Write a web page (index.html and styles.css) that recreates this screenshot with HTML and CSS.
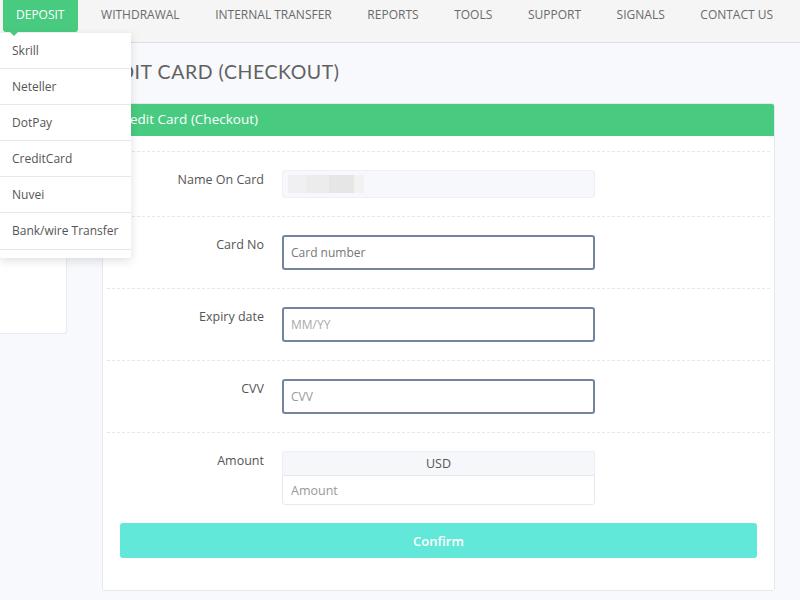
FILE: index.html
```html
<!DOCTYPE html>
<html lang="en">
<head>
  <meta charset="UTF-8" />
  <meta name="viewport" content="width=device-width, initial-scale=1.0"/>
  <title>Deposit - Credit Card (Checkout)</title>
  <link rel="stylesheet" href="styles.css">
</head>
<body>

  <nav class="topnav">
    <ul class="menu">
      <li class="menu-item active">
        <a href="#">Deposit</a>
        <ul class="dropdown">
          <li><a href="#">Skrill</a></li>
          <li><a href="#">Neteller</a></li>
          <li><a href="#">DotPay</a></li>
          <li><a href="#">CreditCard</a></li>
          <li><a href="#">Nuvei</a></li>
          <li><a href="#">Bank/wire Transfer</a></li>
        </ul>
      </li>
      <li class="menu-item"><a href="#">Withdrawal</a></li>
      <li class="menu-item"><a href="#">Internal Transfer</a></li>
      <li class="menu-item"><a href="#">Reports</a></li>
      <li class="menu-item"><a href="#">Tools</a></li>
      <li class="menu-item"><a href="#">Support</a></li>
      <li class="menu-item"><a href="#">Signals</a></li>
      <li class="menu-item"><a href="#">Contact Us</a></li>
    </ul>
  </nav>

  <div class="page">
    <aside class="sidebar"></aside>

    <main class="content">
      <h1 class="page-title">Credit Card (Checkout)</h1>

      <div class="card">
        <div class="card-header">Credit Card (Checkout)</div>
        <div class="card-body">

          <div class="form-row">
            <label>Name On Card</label>
            <div class="input-box readonly"><span class="masked"></span></div>
          </div>

          <div class="form-row">
            <label>Card No</label>
            <div class="input-box hosted"><span class="ph dark">Card number</span></div>
          </div>

          <div class="form-row">
            <label>Expiry date</label>
            <div class="input-box hosted"><span class="ph light">MM/YY</span></div>
          </div>

          <div class="form-row">
            <label>CVV</label>
            <div class="input-box hosted"><span class="ph">CVV</span></div>
          </div>

          <div class="form-row last">
            <label>Amount</label>
            <div class="amount-group">
              <div class="currency">USD</div>
              <input class="amount-input" type="text" placeholder="Amount">
            </div>
          </div>

          <button class="btn-confirm">Confirm</button>
        </div>
      </div>
    </main>
  </div>

</body>
</html>
```

FILE: styles.css
```css
* {
  margin: 0;
  padding: 0;
  box-sizing: border-box;
}
body {
  font-family: "Open Sans", "Liberation Sans", sans-serif;
  background: #f8f9fc;
  color: #555;
  width: 800px;
  height: 600px;
  overflow: hidden;
}
a {
  text-decoration: none;
  color: inherit;
}

/* top menu */
.topnav {
  height: 43px;
  background: #f5f5f5;
  border-bottom: 1px solid #dedede;
  position: relative;
  z-index: 5;
}
.menu {
  list-style: none;
  display: flex;
  gap: 9.6px;
  padding-left: 3px;
}
.menu-item {
  position: relative;
}
.menu-item > a {
  display: block;
  height: 32px;
  line-height: 30px;
  padding: 0 13px;
  font-size: 12px;
  text-transform: uppercase;
  color: #6a6a6a;
  border-radius: 0 0 3px 3px;
}
.menu-item.active > a {
  background: #48cb80;
  color: #fff;
  padding-right: 14px;
}
.menu-item.active > a::after {
  content: "";
  position: absolute;
  left: 7px;
  top: 32px;
  border-left: 4px solid transparent;
  border-right: 4px solid transparent;
  border-top: 4px solid #48cb80;
  z-index: 2;
}
.dropdown {
  list-style: none;
  position: absolute;
  top: 33px;
  left: -3px;
  width: 131px;
  background: #fff;
  padding-bottom: 8px;
  border-radius: 0 0 3px 3px;
  box-shadow: 0 3px 10px rgba(0, 0, 0, 0.12);
}
.dropdown li a {
  display: block;
  height: 36px;
  line-height: 35px;
  padding-left: 12px;
  font-size: 12px;
  color: #555;
  border-bottom: 1px solid #e8e8e8;
}
.dropdown li:last-child a {
  height: 37px;
}

/* page */
.page {
  display: flex;
  align-items: flex-start;
}
.sidebar {
  width: 67px;
  height: 291px;
  background: #fff;
  border-right: 1px solid #e6ebf1;
  border-bottom: 1px solid #e6ebf1;
  border-radius: 0 0 3px 0;
}
.content {
  flex: 1;
  padding: 17px 25px 0 35px;
}
.page-title {
  font-family: "Lato", "Open Sans", sans-serif;
  font-weight: 400;
  font-size: 19.5px;
  line-height: 24px;
  letter-spacing: 0.55px;
  text-transform: uppercase;
  color: #616161;
  margin: 0 0 19px -21px;
}

/* card */
.card {
  background: #fff;
  border: 1px solid #e3e8ef;
  border-radius: 3px;
}
.card-header {
  height: 32px;
  line-height: 31px;
  background: #48cb80;
  color: #fff;
  font-size: 13.5px;
  padding-left: 13px;
  border-radius: 2px 2px 0 0;
}
.card-body {
  padding: 15px 4px 32px;
}
.form-row {
  display: grid;
  grid-template-columns: 157px 313px;
  column-gap: 18px;
  align-items: start;
  border-top: 1px dashed #e3e8f0;
  padding: 18px 0;
}
.form-row.last {
  padding-bottom: 0;
}
.form-row label {
  text-align: right;
  font-size: 12.5px;
  line-height: 19px;
  color: #555;
}
.input-box {
  height: 35px;
  border: 2px solid #73859e;
  border-radius: 3px;
  padding: 0 7px;
  display: flex;
  align-items: center;
  font-size: 12px;
}
.input-box.readonly {
  height: 28px;
  background: #f7f8fb;
  border: 1px solid #edf0f4;
  padding: 0 5px;
}
.masked {
  width: 76px;
  height: 18px;
  background: linear-gradient(to right, #f0f0f2 0 18px, #ececec 18px 41px, #e6e6e6 41px 66px, #f2f2f2 66px);
}
.ph {
  color: #999;
}
.ph.dark {
  color: #777;
}
.ph.light {
  color: #aaa;
}
.amount-group {
  display: flex;
  flex-direction: column;
}
.currency {
  height: 24px;
  line-height: 23px;
  background: #f5f7fa;
  border: 1px solid #eceff3;
  border-bottom: none;
  border-radius: 3px 3px 0 0;
  text-align: center;
  font-size: 12.5px;
  color: #555;
}
.amount-input {
  height: 30px;
  border: 1px solid #e6eaf0;
  border-radius: 0 0 3px 3px;
  padding: 0 8px;
  font-family: inherit;
  font-size: 12.5px;
  outline: none;
}
.amount-input::placeholder {
  color: #999;
}
.btn-confirm {
  display: block;
  width: calc(100% - 26px);
  margin: 18px 0 0 13px;
  height: 35px;
  border: none;
  border-radius: 3px;
  background: #62e8d8;
  color: #fff;
  font-family: inherit;
  font-size: 13px;
  font-weight: 600;
  cursor: pointer;
}
```
